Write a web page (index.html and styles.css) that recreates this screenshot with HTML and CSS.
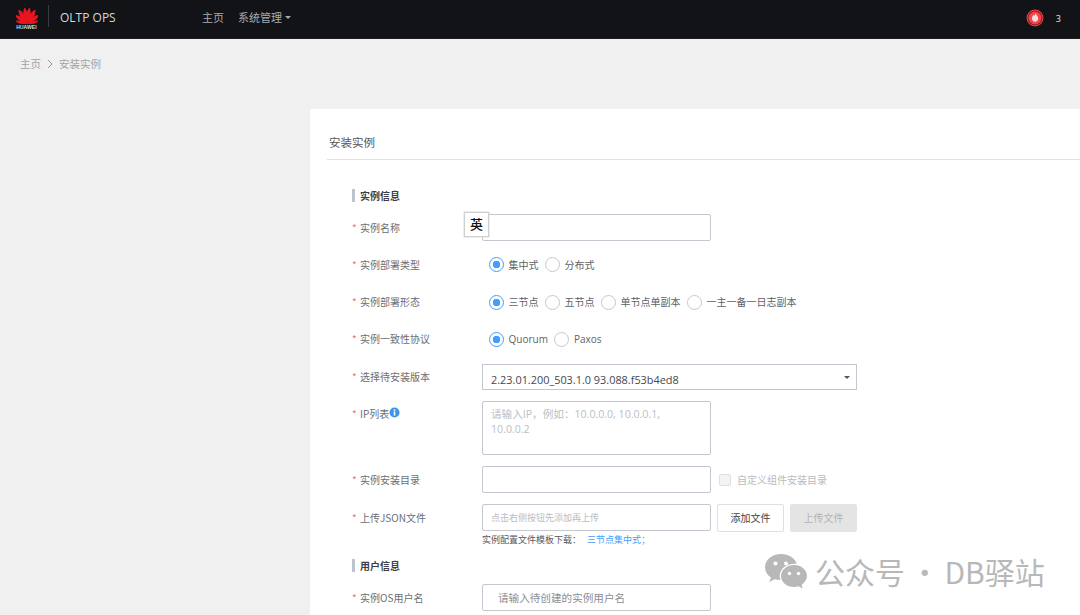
FILE: index.html
```html
<!DOCTYPE html>
<html lang="zh-CN">
<head>
<meta charset="utf-8">
<title>安装实例</title>
<link rel="stylesheet" href="styles.css">
</head>
<body>
<header class="topbar">
  <div class="brand">
    <svg class="logo-mark" viewBox="0 0 24 18" aria-hidden="true">
      <g fill="#e8141e">
        <path transform="rotate(-9 12 18)" d="M12 18C9 12 8.600 5 12 0c3.400 5 3 12 0 18z"/>
        <path transform="rotate(9 12 18)" d="M12 18C9 12 8.600 5 12 0c3.400 5 3 12 0 18z"/>
        <path transform="rotate(-31 12 18)" d="M12 18C9 12 8.600 5 12 0c3.400 5 3 12 0 18z"/>
        <path transform="rotate(31 12 18)" d="M12 18C9 12 8.600 5 12 0c3.400 5 3 12 0 18z"/>
        <path transform="rotate(-54 12 18)" d="M12 18C9.500 12.500 9 6.500 12 1.500c3 5 2.500 11 0 16.500z"/>
        <path transform="rotate(54 12 18)" d="M12 18C9.500 12.500 9 6.500 12 1.500c3 5 2.500 11 0 16.500z"/>
        <path transform="rotate(-77 12 18)" d="M12 18C10 13.500 9.600 8.500 12 4.500c2.400 4 2 9 0 13.500z"/>
        <path transform="rotate(77 12 18)" d="M12 18C10 13.500 9.600 8.500 12 4.500c2.400 4 2 9 0 13.500z"/>
      </g>
    </svg>
    <span class="logo-word">HUAWEI</span>
  </div>
  <span class="brand-divider"></span>
  <span class="product">OLTP OPS</span>
  <nav class="nav">
    <a class="nav-link">主页</a>
    <a class="nav-link">系统管理<i class="nav-caret"></i></a>
  </nav>
  <div class="alerts">
    <svg class="alert-badge" viewBox="0 0 18 18" aria-hidden="true">
      <circle cx="9" cy="9" r="8.500" fill="#e23b41"/>
      <circle cx="9" cy="9" r="7.300" fill="#6e1f24"/>
      <circle cx="9" cy="9" r="6.500" fill="#f2434a"/>
      <path fill="#ffd9d9" d="M9.400 3.800c.3 1.500-.5 2.300-1.100 3-.2-.3-.4-.6-.4-1C6.700 6.700 5.900 8 5.900 9.400c0 1.900 1.500 3.300 3.200 3.300s3.100-1.400 3.100-3.200c0-2.300-1.700-3.100-2.800-5.700z"/>
    </svg>
    <span class="alert-count">3</span>
  </div>
</header>

<div class="crumbs">
  <span>主页</span>
  <svg class="crumb-sep" viewBox="0 0 6 10" aria-hidden="true"><path d="M1 1l4 4-4 4" fill="none" stroke="#9a9a9a" stroke-width="1"/></svg>
  <span>安装实例</span>
</div>

<main class="card">
  <h1 class="card-title">安装实例</h1>
  <form class="form">
    <h2 class="section">实例信息</h2>

    <div class="row">
      <label class="label"><b>*</b>实例名称</label>
      <div class="field"><input class="input" type="text"><span class="ime">英</span></div>
    </div>

    <div class="row">
      <label class="label"><b>*</b>实例部署类型</label>
      <div class="radios">
        <span class="radio on">集中式</span>
        <span class="radio">分布式</span>
      </div>
    </div>

    <div class="row">
      <label class="label"><b>*</b>实例部署形态</label>
      <div class="radios">
        <span class="radio on">三节点</span>
        <span class="radio">五节点</span>
        <span class="radio">单节点单副本</span>
        <span class="radio">一主一备一日志副本</span>
      </div>
    </div>

    <div class="row">
      <label class="label"><b>*</b>实例一致性协议</label>
      <div class="radios">
        <span class="radio on latin">Quorum</span>
        <span class="radio latin">Paxos</span>
      </div>
    </div>

    <div class="row row-select">
      <label class="label"><b>*</b>选择待安装版本</label>
      <div class="select">2.23.01.200_503.1.0 93.088.f53b4ed8<i class="select-caret"></i></div>
    </div>

    <div class="row row-top">
      <label class="label"><b>*</b>IP列表<svg class="info" viewBox="0 0 12 12" aria-hidden="true"><circle cx="6" cy="6" r="5.500" fill="#3f93ea"/><rect x="5.100" y="5" width="1.800" height="4.300" fill="#fff"/><rect x="5.100" y="2.600" width="1.800" height="1.600" fill="#fff"/></svg></label>
      <div class="textarea">请输入IP，例如：10.0.0.0, 10.0.0.1, 10.0.0.2</div>
    </div>

    <div class="row">
      <label class="label"><b>*</b>实例安装目录</label>
      <input class="input" type="text">
      <span class="check"><i class="check-box"></i>自定义组件安装目录</span>
    </div>

    <div class="row row-upload">
      <label class="label"><b>*</b>上传JSON文件</label>
      <div class="input input-hint">点击右侧按钮先添加再上传</div>
      <span class="btn">添加文件</span>
      <span class="btn btn-off">上传文件</span>
    </div>

    <p class="hint">实例配置文件模板下载：<a class="hint-link">三节点集中式；</a></p>

    <h2 class="section section-user">用户信息</h2>

    <div class="row">
      <label class="label"><b>*</b>实例OS用户名</label>
      <div class="input input-ph">请输入待创建的实例用户名</div>
    </div>
  </form>
</main>

<div class="watermark">
  <svg class="wm-icon" viewBox="0 0 42 35" aria-hidden="true">
    <path fill="#b8b8b8" d="M16 0C7.200 0 0 5.900 0 13.200c0 4.200 2.300 7.800 5.900 10.200L4.400 28l5.300-2.800c1.900.5 3.800.8 5.700.8-.5-1.400-.7-2.600-.7-3.900C14.700 15 21.100 9.700 29.500 9.700c.8 0 1.500.1 2.200.2C30.100 4.200 23.700 0 16 0z"/>
    <path fill="#b8b8b8" d="M42 22c0-6.400-6-11.100-12.900-11.100C22 10.900 16 15.600 16 22s6 11 13.100 11c1.500 0 3-.3 4.500-.7l4.100 2.300-1.100-3.800C39.700 28.500 42 25.500 42 22z"/>
    <circle cx="10.500" cy="9.500" r="2" fill="#fff"/><circle cx="21" cy="9.500" r="2" fill="#fff"/>
    <circle cx="24.500" cy="19.500" r="1.700" fill="#fff"/><circle cx="33.500" cy="19.500" r="1.700" fill="#fff"/>
  </svg>
  <span class="wm-text">公众号 · DB驿站</span>
</div>
</body>
</html>
```
FILE: styles.css
```css
* { box-sizing: border-box; }
html, body { margin: 0; height: 615px; overflow: hidden; }
body {
  position: relative;
  background: #f0f0f0;
  font-family: "Noto Sans CJK SC", "Open Sans", sans-serif;
  font-size: 10px;
  color: #606266;
}

/* top bar */
.topbar {
  height: 39px;
  background: #111316;
  display: flex;
  align-items: center;
  padding-left: 15px;
  border-bottom: 1px solid #1d1d1d;
}
.brand { width: 23px; display: flex; flex-direction: column; align-items: center; margin-top: -1px; }
.logo-mark { width: 22px; height: 17px; display: block; }
.logo-word { font: 700 5px/6px "Liberation Sans", sans-serif; color: #ddd; letter-spacing: .1px; }
.brand-divider { width: 1px; height: 22px; background: #3a3c3f; margin: -6px 11px 0 10px; }
.product { font: 12px "Open Sans", sans-serif; color: #d5d8dc; width: 142px; margin-top: -4px; }
.nav { display: flex; gap: 14px; margin-top: -4px; }
.nav-link { font-size: 11px; color: #a8abb0; display: flex; align-items: center; }
.nav-caret {
  margin-left: 3px;
  border: 3px solid transparent;
  border-top-color: #a8abb0;
  border-bottom: 0;
}
.alerts { margin-left: auto; display: flex; align-items: center; margin-right: 19px; margin-top: -2px; }
.alert-badge { width: 18px; height: 18px; }
.alert-count { font: 9px "Open Sans", sans-serif; color: #e6e6e6; margin-left: 12px; }

/* breadcrumb */
.crumbs {
  height: 70px;
  padding: 17px 0 0 20px;
  display: flex;
  align-items: flex-start;
  gap: 6px;
  font-size: 10.500px;
  line-height: 16px;
  color: #a3a3a3;
}
.crumb-sep { width: 6px; height: 10px; margin-top: 3px; }

/* card */
.card { margin-left: 310px; height: 520px; background: #fff; }
.card-title {
  margin: 0 0 0 17px;
  height: 51px;
  padding: 24px 0 0 2px;
  font-size: 11.500px;
  line-height: 18px;
  font-weight: 400;
  color: #555;
  border-bottom: 1px solid #dfe3e8;
}
.form { padding: 29px 0 0 42px; display: flex; flex-direction: column; }
.section {
  margin: 0 0 12px;
  height: 13px;
  padding-left: 5px;
  border-left: 3px solid #bcc5ce;
  font-size: 10px;
  line-height: 13px;
  font-weight: 700;
  color: #3b3f46;
}
.section-user { margin-top: 11px; margin-bottom: 12px; }

.row { display: flex; align-items: center; height: 27px; margin-bottom: 10.250px; }
.row-select { margin-bottom: 11px; margin-top: 1px; height: 26px; }
.row-top { align-items: flex-start; height: 54px; margin-bottom: 11px; }
.row-top .label { margin-top: 5px; }
.row-upload { margin-top: .750px; margin-bottom: 1px; }
.label { width: 130px; flex: none; display: flex; align-items: center; line-height: 16px; color: #6b6e74; }
.label b { width: 8px; font-weight: 400; color: #f56c6c; }
.info { width: 11px; height: 11px; margin: -4px 0 0 0; }

.field { position: relative; }
.input {
  display: block;
  width: 229px;
  height: 27px;
  margin: 0;
  padding: 0;
  background: #fff;
  border: 1px solid #c4c6d0;
  border-radius: 2px;
}
.input-hint { padding-left: 8px; font-size: 9px; line-height: 25px; color: #b9bcc2; }
.input-ph { padding-left: 15px; font-size: 10.600px; line-height: 25px; color: #8a8d93; }
.ime {
  position: absolute;
  left: -18px; top: -2px;
  width: 25px; height: 25px;
  background: #fff;
  border: 1px solid #cfcfcf;
  box-shadow: 0 0 0 .5px #ddd;
  font-size: 13px;
  line-height: 22px;
  font-weight: 500;
  text-align: center;
  color: #111;
}

.radios { display: flex; padding-left: 7px; gap: 6.500px; }
.radio { display: flex; align-items: center; color: #606266; line-height: 16px; }
.radio::before {
  content: "";
  width: 13px; height: 13px;
  margin-right: 4.500px;
  border-radius: 50%;
  border: 1px solid #c6c8cc;
  background: #fff;
}
.radio.on::before {
  border-color: #409eff;
  background: radial-gradient(circle, #409eff 0 3.500px, #fff 4px);
}
.latin { font-family: "Open Sans", sans-serif; font-size: 10px; }

.select {
  position: relative;
  width: 375px; height: 26px;
  padding: 4px 0 0 8px;
  border: 1px solid #c4c6d0;
  font: 10.900px/22px "Open Sans", sans-serif;
  color: #454850;
}
.select-caret {
  position: absolute;
  right: 6px; top: 11px;
  border: 3px solid transparent;
  border-top-color: #555;
  border-bottom: 0;
}
.textarea {
  width: 229px; height: 54px;
  padding: 5px 20px 0 8px;
  border: 1px solid #c4c6d0;
  border-radius: 2px;
  font: 10.600px/15px "Open Sans", "Noto Sans CJK SC", sans-serif;
  color: #bcbec4;
}

.check { display: flex; align-items: center; margin-left: 8px; color: #b9bbc0; }
.check-box {
  width: 12px; height: 12px;
  margin-right: 6px;
  background: #f2f3f5;
  border: 1px solid #dcdfe6;
  border-radius: 2px;
}
.btn {
  width: 67px; height: 28px;
  margin-left: 6px;
  text-align: center;
  font-size: 10px;
  line-height: 26px;
  color: #444;
  background: #fff;
  border: 1px solid #dcdfe6;
  border-radius: 2px;
}
.btn-off { background: #e4e4e4; border-color: #e4e4e4; color: #b3b3b3; }
.hint { margin: 0 0 0 130px; font-size: 9px; line-height: 16px; color: #55585e; }
.hint-link { color: #409eff; margin-left: 6px; }

/* watermark over the page */
.watermark {
  position: absolute;
  left: 765px; top: 553px;
  display: flex;
  align-items: center;
  gap: 8px;
  font-size: 30px;
  line-height: 36px;
  color: #b8b8b8;
  white-space: nowrap;
}
.wm-icon { width: 42px; height: 35px; }
.wm-text { word-spacing: -2px; }
```
